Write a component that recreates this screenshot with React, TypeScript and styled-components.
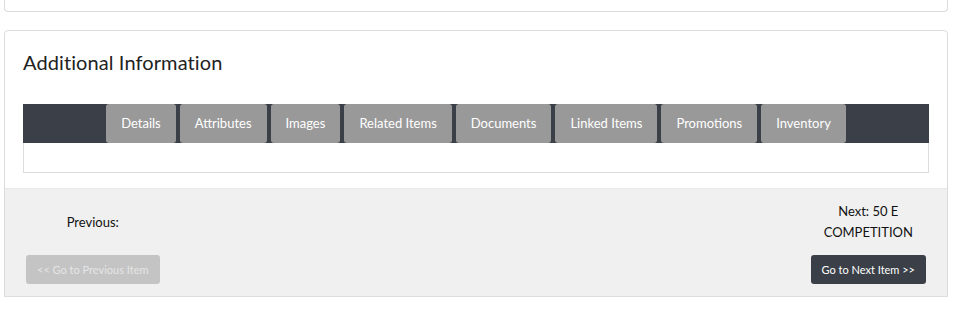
import React, { FunctionComponent } from 'react'
import styled, { createGlobalStyle } from 'styled-components'

const GlobalStyle = createGlobalStyle`
  body {
    margin: 0;
    background: #fff;
    font-family: Lato, 'Open Sans', sans-serif;
    color: #222;
  }
`

const Page = styled.div`
  width: 944px;
  padding: 0 0 0 4px;
  display: flex;
  flex-direction: column;
  gap: 18px;
`

const TopCard = styled.div`
  height: 11px;
  border: 1px solid #dcdcdc;
  border-top: none;
  border-radius: 0 0 4px 4px;
`

const Card = styled.section`
  border: 1px solid #dcdcdc;
  border-radius: 4px 4px 0 0;
  background: #fff;
  display: flex;
  flex-direction: column;
`

const CardBody = styled.div`
  padding: 19px 18px 15px;
  display: flex;
  flex-direction: column;
`

const Title = styled.h2`
  margin: 0 0 30px;
  font-size: 20px;
  line-height: 24px;
  font-weight: 400;
  letter-spacing: 0.1px;
  color: #222;
`

const TabBar = styled.nav`
  height: 39px;
  background: #3b3f48;
  display: flex;
  justify-content: center;
  gap: 4px;
`

const Tab = styled.button`
  height: 39px;
  padding: 0 15px 2px;
  border: none;
  border-radius: 3px;
  background: #999999;
  color: #fff;
  font-family: inherit;
  font-size: 13px;
`

const TabPanel = styled.div`
  height: 29px;
  border: 1px solid #dcdcdc;
  border-top: none;
`

const Pager = styled.footer`
  background: #f0f0f0;
  border-top: 1px solid #e8e8e8;
  padding: 12px 21px;
  display: flex;
  justify-content: space-between;
`

const PagerColumn = styled.div`
  display: flex;
  flex-direction: column;
  align-items: center;
  gap: 12px;
`

const PagerLabel = styled.p`
  margin: 0;
  min-height: 42px;
  display: flex;
  align-items: center;
  justify-content: center;
  text-align: center;
  font-size: 13px;
  line-height: 21px;
  color: #111;
`

const PagerButton = styled.button<{ dark?: boolean }>`
  height: 29px;
  padding: 0 11px;
  border: none;
  border-radius: 3px;
  font-family: inherit;
  font-size: 11px;
  background: ${(props) => (props.dark ? '#3b3f48' : '#c4c4c5')};
  color: ${(props) => (props.dark ? '#fff' : '#e4e4e4')};
`

const tabs = [
  'Details',
  'Attributes',
  'Images',
  'Related Items',
  'Documents',
  'Linked Items',
  'Promotions',
  'Inventory'
]

const App: FunctionComponent = () => {
  return (
    <>
      <GlobalStyle />
      <Page>
        <TopCard />
        <Card>
          <CardBody>
            <Title>Additional Information</Title>
            <TabBar>
              {tabs.map((t) => (
                <Tab key={t}>{t}</Tab>
              ))}
            </TabBar>
            <TabPanel />
          </CardBody>
          <Pager>
            <PagerColumn>
              <PagerLabel>Previous:</PagerLabel>
              <PagerButton>&lt;&lt; Go to Previous Item</PagerButton>
            </PagerColumn>
            <PagerColumn>
              <PagerLabel>
                Next: 50 E
                <br />
                COMPETITION
              </PagerLabel>
              <PagerButton dark>Go to Next Item &gt;&gt;</PagerButton>
            </PagerColumn>
          </Pager>
        </Card>
      </Page>
    </>
  )
}

export default App
